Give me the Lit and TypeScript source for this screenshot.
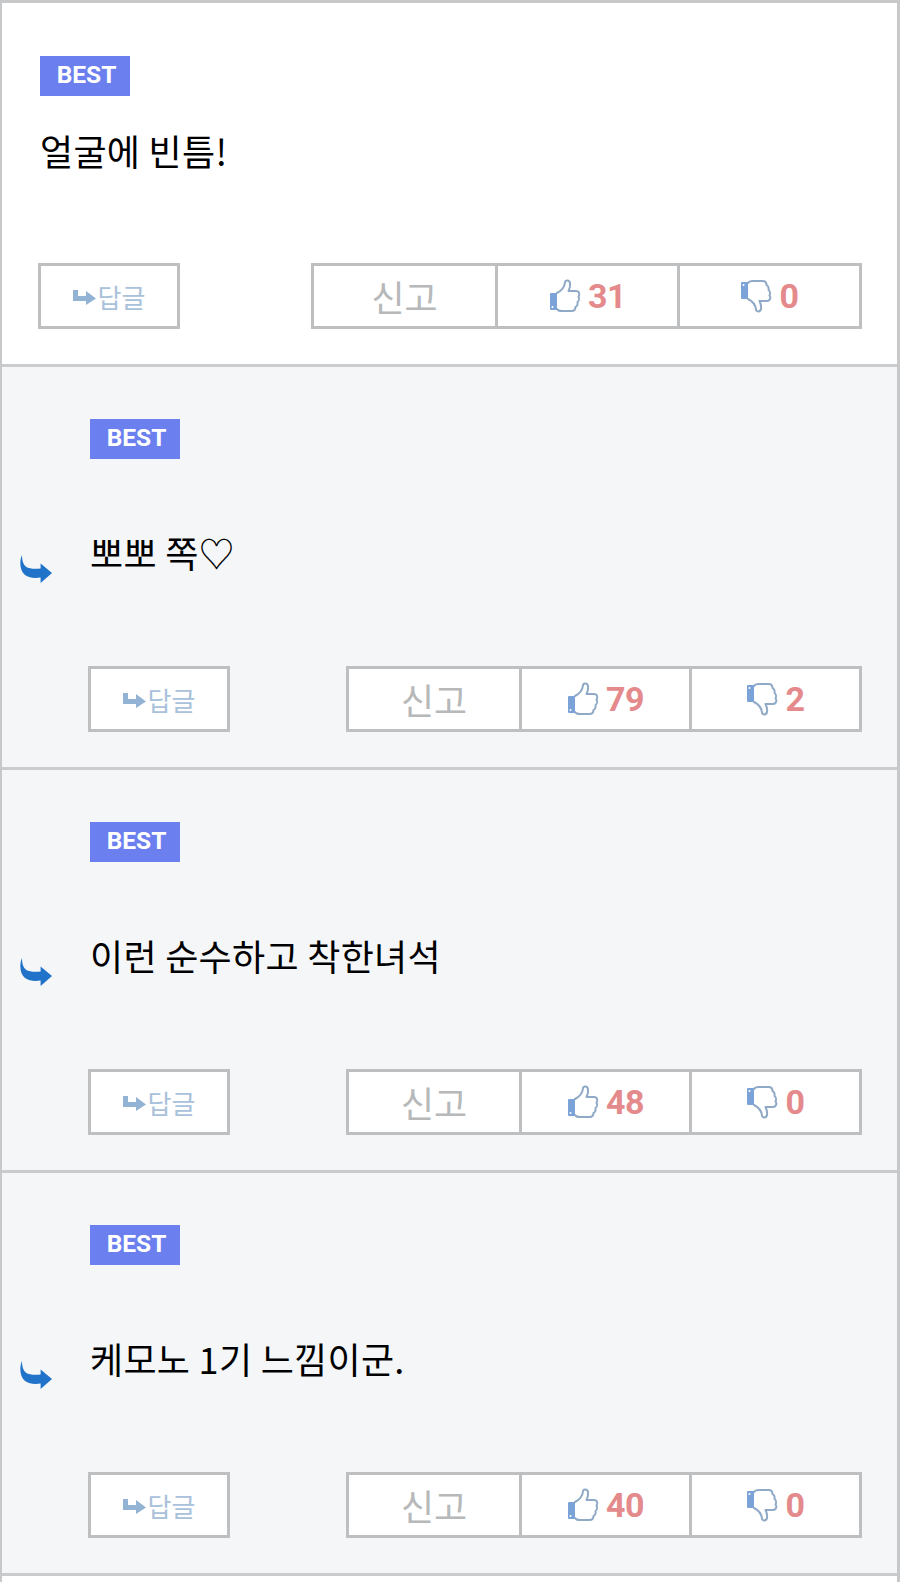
import { LitElement, html, css, svg } from "lit";
import { customElement } from "lit/decorators.js";

const rows = [
  { text: "얼굴에 빈틈!", up: 31, down: 0, nested: false },
  { text: "뽀뽀 쪽♡", up: 79, down: 2, nested: true },
  { text: "이런 순수하고 착한녀석", up: 48, down: 0, nested: true },
  { text: "케모노 1기 느낌이군.", up: 40, down: 0, nested: true },
];

const thumb = svg`<path d="M8 14 C12 12 15.5 8 16 3.5 C16.3 0.8 20.5 1 21 4 C21.5 7 20.5 10 19.5 12 L27 12 C30.5 12 31 16 29.5 17.5 C30.5 19.5 30 22 28.5 23 C29 25 28 27.5 26.5 28 C26.5 30.5 25 32 22.5 32 L13 32 C10.5 32 8.5 31 8 30" fill="none" stroke="#8fa9c6" stroke-width="2" stroke-linejoin="round" stroke-linecap="round"/><rect x="1" y="14" width="7" height="17" rx="1" fill="#7ba3d8"/><circle cx="3.5" cy="28" r="1" fill="#fff"/>`;

@customElement("app-root")
export class AppRoot extends LitElement {
  static styles = css`
    :host { display: block; width: 900px; height: 1582px; box-sizing: border-box; background: #fff; border: solid #c6c8ca; border-width: 3px 3px 0 2px; font-family: "Noto Sans CJK KR", "Noto Sans", sans-serif; overflow: hidden; }
    .row { box-sizing: border-box; height: 403px; border-bottom: 3px solid #c9cbcd; padding: 53px 35px 0 36px; display: flex; flex-direction: column; position: relative; }
    .row.first { height: 364px; }
    .row.nested { background: #f4f6f8; padding: 52px 35px 0 86px; }
    .badge { align-self: flex-start; box-sizing: border-box; width: 90px; height: 40px; padding-left: 3px; margin-left: 2px; background: #6b80ee; color: #fff; font: 700 24.5px/38px Roboto, sans-serif; text-align: center; }
    .body { margin: 29px 0 0 2px; height: 138px; font-size: 36px; line-height: 50px; color: #000; letter-spacing: 0.3px; }
    .nested .body { margin-top: 68px; height: 139px; }
    .arrow { position: absolute; left: 18px; top: 188px; width: 32px; height: 28px; }
    .actions { display: flex; justify-content: space-between; height: 66px; }
    .reply { box-sizing: border-box; width: 142px; height: 66px; background: #fff; border: 3px solid #bdbfc1; display: flex; align-items: center; justify-content: center; gap: 2px; color: #a9c1da; font-size: 26px; }
    .reply svg { width: 23px; height: 15px; margin-top: 2px; }
    .group { display: flex; height: 66px; box-sizing: border-box; border: 3px solid #bdbfc1; background: #fff; }
    .cell { display: flex; align-items: center; justify-content: center; gap: 7px; border-left: 3px solid #bdbfc1; box-sizing: border-box; width: 182px; font: 700 34px Roboto, sans-serif; letter-spacing: -0.5px; color: #e58a8c; }
    .nested .cell { width: 170px; }
    .cell.report { border-left: none; width: 181px; color: #b6b8ba; font: 400 36px "Noto Sans CJK KR", sans-serif; letter-spacing: 0; }
    .nested .cell.report { width: 170px; }
    .cell svg { width: 32px; height: 34px; }
    .down svg { transform: scale(1, -1); }
  `;

  render() {
    return rows.map((r, i) => html`
      <section class="row ${i === 0 ? "first" : "nested"}">
        ${r.nested ? html`<svg class="arrow" viewBox="0 0 32 28"><path d="M2 0 C2 7 4 12 9 13 C13 14 17 14 20.6 13.5 L20.6 8.5 L32 18 L20.6 28 L20.6 22.5 C15 23.5 9 23 5 20 C0 16 -1 7 2 0 Z" fill="#2173c9"/></svg>` : ""}
        <div class="badge">BEST</div>
        <div class="body">${r.text}</div>
        <div class="actions">
          <div class="reply">
            <svg viewBox="0 0 23 15"><path d="M0 0 H5 V6 H13 V1 L23 8.5 L13 15 V11 H0 Z" fill="#93b3d4"/></svg>
            <span>답글</span>
          </div>
          <div class="group">
            <div class="cell report">신고</div>
            <div class="cell"><svg viewBox="0 0 32 34">${thumb}</svg>${r.up}</div>
            <div class="cell down"><svg viewBox="0 0 32 34">${thumb}</svg>${r.down}</div>
          </div>
        </div>
      </section>
    `);
  }
}
